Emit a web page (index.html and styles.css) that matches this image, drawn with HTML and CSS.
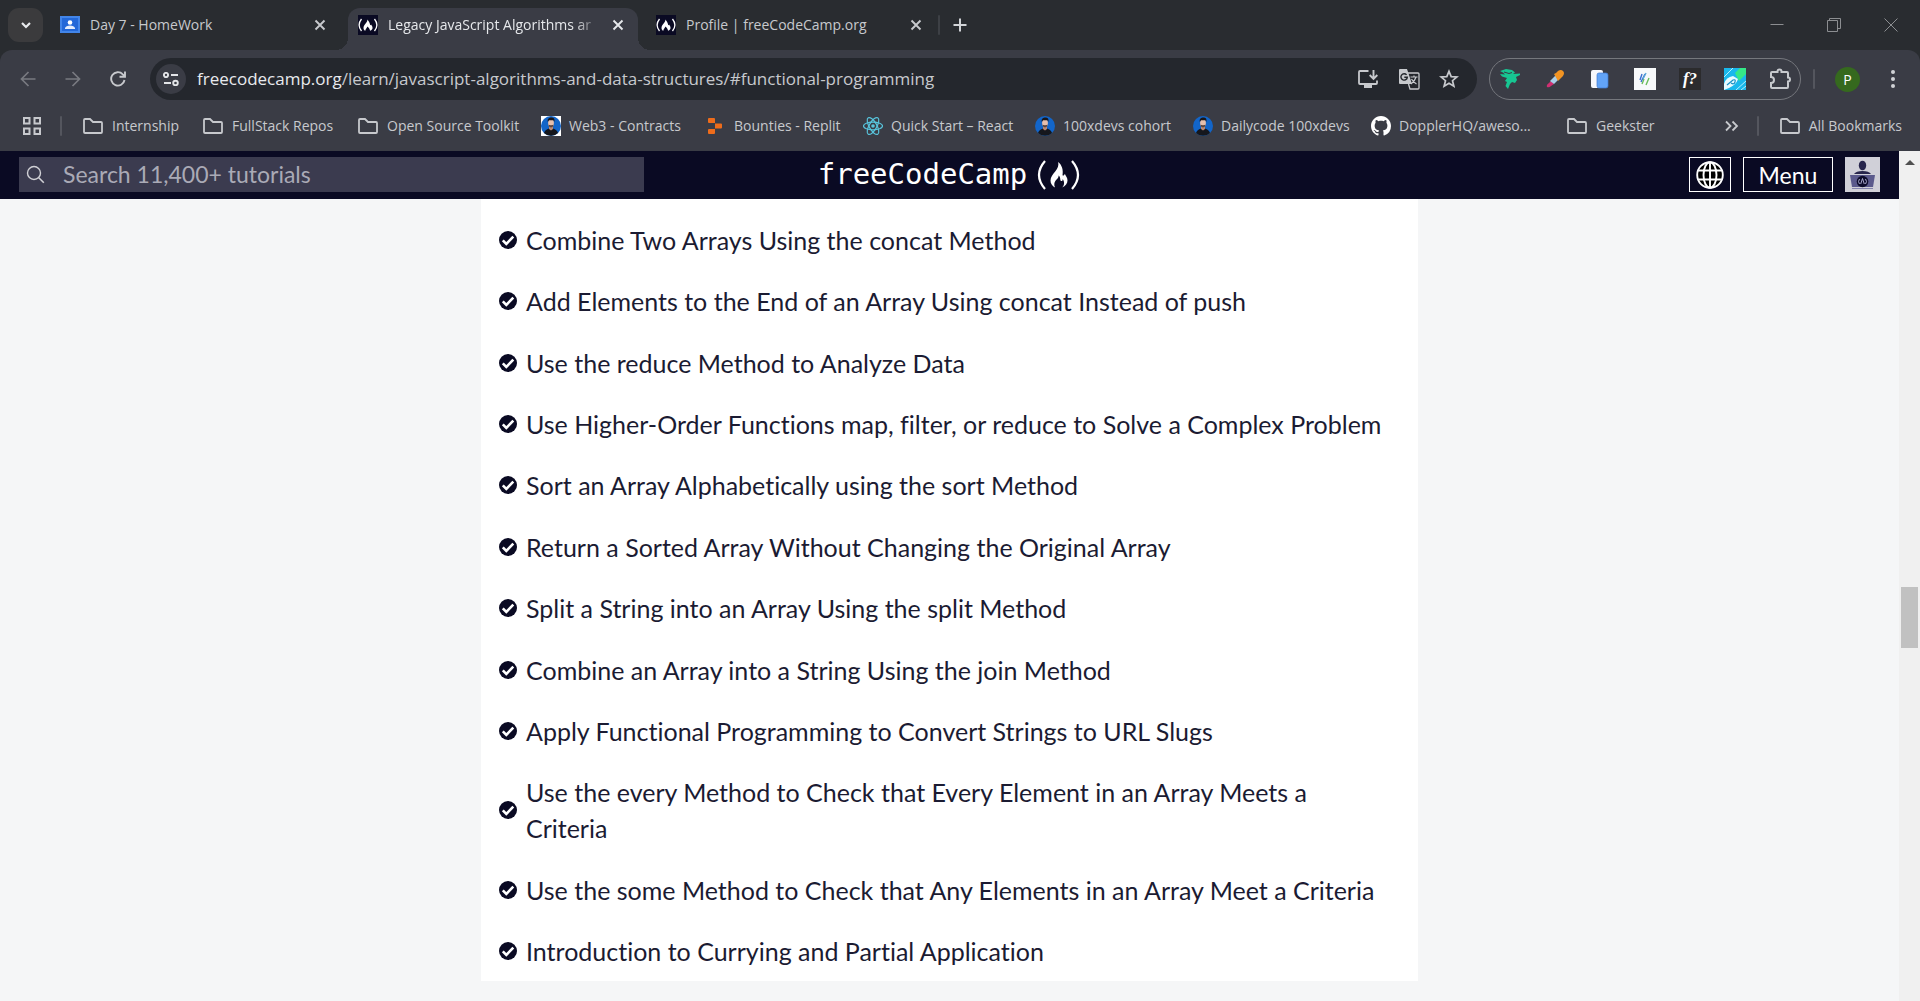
FILE: index.html
```html
<!DOCTYPE html>
<html lang="en">
<head>
<meta charset="utf-8">
<title>Legacy JavaScript Algorithms and Data Structures</title>
<link rel="stylesheet" href="styles.css">
</head>
<body>
<svg class="defs" aria-hidden="true">
  <symbol id="folder" viewBox="0 0 22 18"><path d="M2 15V3q0-1 1-1h5l3 3h8q1 0 1 1v9q0 1-1 1H3q-1 0-1-1z" fill="none" stroke="currentColor" stroke-width="1.8"/></symbol>
  <symbol id="cross" viewBox="0 0 16 16"><path d="M3.500 3.500l9 9M12.500 3.500l-9 9" stroke="currentColor" stroke-width="1.900"/></symbol>
  <symbol id="flame" viewBox="0 0 18 26"><path d="M8.200 0C8.800 3.500 8 6 5.200 9.500C3 12.300.5 14.800.5 18.500C.5 21.500 2.200 24 5 25.500C3.600 22.500 4.200 19.500 7 17C8.200 16 8.800 14.500 8.500 13.400C10.700 14.800 10 17.500 10.700 18.700C11.800 19.500 13 18.500 12.600 16.900C14.800 19.500 14.500 23.500 12 25.500C15.500 24 17.600 21.500 17.500 18.200C17.400 15.500 15.600 14 14.800 11.800C14.400 13.200 13.500 14 12.500 13.300C13.400 8 12 3 8.200 0z" fill="#fff"/></symbol>
  <symbol id="camp" viewBox="0 0 20 20"><path d="M0 0h20v20H0z" fill="#0a0a23"/><path d="M3.500 4q-4.800 6 0 12M16.500 4q4.800 6 0 12" fill="none" stroke="#fff" stroke-width="1.300"/><path d="M9.300 4.500c.7 3-3.800 5-3.800 8.500 0 1.500.8 2.400 1.800 2.800.2-2.200 1.700-2.600 2.100-4.300 1 .9 2.200 2 2.700 4.200 1.600-.6 2.600-1.500 2.400-3.200-.1-1.400-1-2-1.400-3-.2.7-.5.900-.9.600C11.800 8 10.800 6 9.300 4.500z" fill="#fff"/></symbol>
  <symbol id="check" viewBox="0 0 18 18"><circle cx="9" cy="9" r="9" fill="#0a0a23"/><path d="M3.800 9.300l3.500 3.600 7-7.200" fill="none" stroke="#fff" stroke-width="2.600"/></symbol>
  <symbol id="person" viewBox="0 0 20 20"><circle cx="10" cy="10" r="10" fill="#1265c9"/><path d="M3 17q1-3.500 5-4.500h4q4 1 5 4.500a10 10 0 0 1-14 0z" fill="#15171d"/><path d="M8 9h4v4l-2 1.500-2-1.500z" fill="#b98873"/><ellipse cx="10" cy="7" rx="2.900" ry="3.900" fill="#e6bfac"/><path d="M6.800 6C6 2 9 1.200 11 1.500c2.500.3 2.800 2.500 2.300 4.500L12.500 4.200H8z" fill="#1b1719"/><path d="M7.300 8.800q2.700.8 5.400 0-.5 2.600-2.700 2.600T7.300 8.800z" fill="#5a453f"/></symbol>
</svg>

<header class="tabstrip">
  <button class="tab-search" aria-label="Search tabs"><svg width="16" height="16" viewBox="0 0 16 16"><path d="M4 6l4 4 4-4" fill="none" stroke="#e8eaed" stroke-width="2.200"/></svg></button>
  <nav class="tabs" aria-label="Tabs">
    <div class="tab">
      <svg class="fav" viewBox="0 0 20 20"><path d="M0 1h20v17H0z" fill="#4285e8"/><path d="M2 3h16v13H2z" fill="#2368d8"/><circle cx="10" cy="7.500" r="2.300" fill="#fff"/><path d="M5 14v-1q1-2.500 5-2.500t5 2.500v1z" fill="#e4edfc"/></svg>
      <span class="tab-title">Day 7 - HomeWork</span>
      <button class="icon-btn" aria-label="Close tab"><svg class="x"><use href="#cross"/></svg></button>
    </div>
    <div class="tab tab-active">
      <svg class="fav"><use href="#camp"/></svg>
      <span class="tab-title">Legacy JavaScript Algorithms ar</span>
      <button class="icon-btn" aria-label="Close tab"><svg class="x"><use href="#cross"/></svg></button>
    </div>
    <div class="tab">
      <svg class="fav"><use href="#camp"/></svg>
      <span class="tab-title">Profile | freeCodeCamp.org</span>
      <button class="icon-btn" aria-label="Close tab"><svg class="x"><use href="#cross"/></svg></button>
    </div>
  </nav>
  <span class="rule"></span>
  <button class="icon-btn new-tab" aria-label="New tab"><svg width="14" height="14" viewBox="0 0 14 14"><path d="M7 .5v13M.5 7h13" stroke="#d2d4d8" stroke-width="2"/></svg></button>
  <div class="window-controls">
    <button class="icon-btn" aria-label="Minimize"><svg width="14" height="14" viewBox="0 0 14 14"><path d="M.5 6.500h13" stroke="currentColor"/></svg></button>
    <button class="icon-btn" aria-label="Restore"><svg width="14" height="14" viewBox="0 0 14 14"><path d="M.5 2.500h10v11H.5zM2.500 2.500v-2h11v10h-3" fill="none" stroke="currentColor"/></svg></button>
    <button class="icon-btn" aria-label="Close"><svg width="14" height="14" viewBox="0 0 14 14"><path d="M.5.5l13 13M13.500.5l-13 13" stroke="currentColor"/></svg></button>
  </div>
</header>

<section class="chrome">
  <div class="toolbar">
    <div class="nav-buttons">
      <button class="icon-btn dim" aria-label="Back"><svg width="16" height="16" viewBox="0 0 16 16"><path d="M15.500 8H2M8.500 1L1.500 8l7 7" fill="none" stroke="currentColor" stroke-width="1.700"/></svg></button>
      <button class="icon-btn dim" aria-label="Forward"><svg width="16" height="16" viewBox="0 0 16 16"><path d="M.5 8H14M7.500 1l7 7-7 7" fill="none" stroke="currentColor" stroke-width="1.700"/></svg></button>
      <button class="icon-btn" aria-label="Reload"><svg width="16" height="16" viewBox="0 0 16 16"><path d="M14.500 9A6.700 6.700 0 1 1 12.800 3.300L15 5.500M15 .5v5.300H9.500" fill="none" stroke="currentColor" stroke-width="1.900"/></svg></button>
    </div>
    <div class="omnibox">
      <button class="site-info" aria-label="View site information"><svg width="16" height="14" viewBox="0 0 16 14"><g fill="none" stroke="#e3e5e8" stroke-width="1.900"><circle cx="3" cy="3" r="2.100"/><path d="M8 3h7M1 11h7"/><circle cx="12.500" cy="11" r="2.300"/></g></svg></button>
      <a class="url" href="#functional-programming"><span class="host">freecodecamp.org</span>/learn/javascript-algorithms-and-data-structures/#functional-programming</a>
      <div class="page-actions">
        <button class="icon-btn" aria-label="Install"><svg width="22" height="20" viewBox="0 0 22 20"><path d="M11.500 2H3q-1 0-1 1v11q0 1 1 1h16q1 0 1-1v-2.500" fill="none" stroke="currentColor" stroke-width="1.800"/><path d="M7 15h8v4H7z" fill="currentColor"/><path d="M16.500 1v8M12.700 6l3.800 3.800L20.300 6" fill="none" stroke="currentColor" stroke-width="1.900"/></svg></button>
        <button class="icon-btn" aria-label="Translate"><svg width="22" height="22" viewBox="0 0 22 22"><path d="M2 1h7l5 15H2q-1 0-1-1V2q0-1 1-1z" fill="#c7c9cd"/><path d="M10 5h10q1 0 1 1v14q0 1-1 1h-8l-1.500-5" fill="none" stroke="#c7c9cd" stroke-width="1.300"/><path d="M8.600 6.900A3.200 3.200 0 1 0 9.300 9.300H6.300" fill="none" stroke="#24272d" stroke-width="1.400"/><path d="M12.500 9h7M16 7.500V9M18 9q-1 4-5 7M13.500 11q1.500 3 5 5" fill="none" stroke="#c7c9cd" stroke-width="1.200"/></svg></button>
        <button class="icon-btn" aria-label="Bookmark this page"><svg width="20" height="20" viewBox="0 0 20 20"><path d="M10 2.300l2.200 5.300 5.700.4-4.400 3.700 1.400 5.600L10 14.300l-4.900 3 1.400-5.600L2.100 8l5.700-.4z" fill="none" stroke="currentColor" stroke-width="1.700"/></svg></button>
      </div>
    </div>
    <div class="extensions">
      <svg viewBox="0 0 22 22"><path d="M1 3l6-2 6 1 3 2.500-2 1.500 7-.5v1.500l-4 2 1 3-2 3-3-1-2 2-2 5-2.500-3 1.500-4-2-1 2-3-5-1.500-2-2.500 5 .5-2-2z" fill="#17c692"/><path d="M5 4l5 1.500 3-1" stroke="#3a3c45" fill="none"/></svg>
      <svg viewBox="0 0 22 22"><path d="M3 19q-1-2 2-4l2-2 3 3-3 2q-2 2-4 1z" fill="#cf2f72"/><path d="M6 13l6-6 4 3-6 6z" fill="#a9cee9"/><path d="M10 6l2-1 2-2q3-2 5 0t0 5l-4 4-1 1z" fill="#f29423"/></svg>
      <svg viewBox="0 0 22 22"><rect x="2" y="2" width="12" height="18" rx="2" fill="#f7f7fc"/><rect x="8" y="5" width="11" height="15" rx="2" fill="#62a3f7" stroke="#3f79d1" stroke-width=".7"/></svg>
      <svg viewBox="0 0 22 22"><path d="M0 0h22v22H0z" fill="#f7f9fb"/><g fill="none" stroke-width="1.400"><path d="M6 12l2-6M7 14l4-8" stroke="#3a6fd0"/><path d="M12 17l3-7M8 16l2-5" stroke="#69bd5b"/><path d="M9 11l3-6" stroke="#5aa7d8"/></g></svg>
      <span class="ext-font">f?</span>
      <svg viewBox="0 0 22 22"><path d="M0 0h22v22H0z" fill="#19b8ec"/><path d="M11 5l5-5h6v6l-7 7z" fill="#35e887"/><path d="M0 16q2-7 9-8l5 3q-2 6-9 9l-5 2z" fill="#e7fbff"/><path d="M3 17l6-5q3-1 2 2t-4 1" fill="none" stroke="#168fc4" stroke-width="1.200"/><path d="M0 9l9-9M12 22l10-9M17 22l5-4" stroke="#b5f0ff"/></svg>
      <svg viewBox="0 0 22 22"><path d="M3 4h5.500V3.500a2 2 0 0 1 4 0V4H18q1 0 1 1v4.500a2 2 0 0 1 0 4V19q0 1-1 1H3q-1 0-1-1v-4a3 3 0 0 0 0-6V5q0-1 1-1z" fill="none" stroke="#c7c9cd" stroke-width="2"/></svg>
    </div>
    <span class="rule"></span>
    <button class="profile" aria-label="Profile">P</button>
    <button class="icon-btn more" aria-label="More"><svg width="4" height="20" viewBox="0 0 4 20"><g fill="#d0d2d6"><circle cx="2" cy="3" r="2"/><circle cx="2" cy="10" r="2"/><circle cx="2" cy="17" r="2"/></g></svg></button>
  </div>

  <nav class="bookmarks" aria-label="Bookmarks">
    <button class="icon-btn" aria-label="Apps"><svg width="20" height="20" viewBox="0 0 20 20"><g fill="none" stroke="currentColor" stroke-width="2"><path d="M2 2h5.500v5.500H2zM12.500 2H18v5.500h-5.500zM2 12.500h5.500V18H2zM12.500 12.500H18V18h-5.500z"/></g></svg></button>
    <span class="rule"></span>
    <div class="bookmark-list">
      <a href="#"><svg class="fold"><use href="#folder"/></svg>Internship</a>
      <a href="#"><svg class="fold"><use href="#folder"/></svg>FullStack Repos</a>
      <a href="#"><svg class="fold"><use href="#folder"/></svg>Open Source Toolkit</a>
      <a href="#"><svg class="fav white"><use href="#person"/></svg>Web3 - Contracts</a>
      <a href="#"><svg class="fav" viewBox="0 0 20 20"><path d="M3 2h5q1 0 1 1v4H3q-1 0-1-1V3q0-1 1-1zM9 7.500h6q1 0 1 1v3q0 1-1 1H9zM3 13h6v4q0 1-1 1H3q-1 0-1-1v-3q0-1 1-1z" fill="#ee6c1b"/></svg>Bounties - Replit</a>
      <a href="#"><svg class="fav" viewBox="0 0 20 20"><g fill="none" stroke="#58c4dc" stroke-width="1.200"><ellipse cx="10" cy="10" rx="9.500" ry="3.800"/><ellipse cx="10" cy="10" rx="9.500" ry="3.800" transform="rotate(60 10 10)"/><ellipse cx="10" cy="10" rx="9.500" ry="3.800" transform="rotate(120 10 10)"/></g><circle cx="10" cy="10" r="1.800" fill="#58c4dc"/></svg>Quick Start – React</a>
      <a href="#"><svg class="fav"><use href="#person"/></svg>100xdevs cohort</a>
      <a href="#"><svg class="fav"><use href="#person"/></svg>Dailycode 100xdevs</a>
      <a href="#"><svg class="fav" viewBox="0 0 16 16"><path fill="#fff" d="M8 0C3.580 0 0 3.580 0 8c0 3.540 2.290 6.530 5.470 7.590.4.070.55-.17.55-.38 0-.19-.01-.82-.01-1.490-2.010.37-2.530-.49-2.690-.94-.09-.23-.48-.94-.82-1.130-.28-.15-.68-.52-.01-.53.63-.01 1.080.58 1.230.82.72 1.210 1.870.87 2.330.66.07-.52.28-.87.51-1.070-1.780-.2-3.640-.89-3.640-3.950 0-.87.31-1.590.82-2.150-.08-.2-.36-1.020.08-2.120 0 0 .67-.21 2.200.82.64-.18 1.320-.27 2-.27s1.360.09 2 .27c1.530-1.040 2.200-.82 2.200-.82.44 1.100.16 1.920.08 2.120.51.56.82 1.270.82 2.150 0 3.070-1.870 3.750-3.650 3.950.29.25.54.73.54 1.480 0 1.070-.01 1.930-.01 2.200 0 .21.15.46.55.38A8.010 8.010 0 0 0 16 8c0-4.420-3.580-8-8-8z"/></svg>DopplerHQ/aweso...</a>
      <a href="#"><svg class="fold"><use href="#folder"/></svg>Geekster</a>
    </div>
    <button class="icon-btn" aria-label="More bookmarks"><svg width="14" height="12" viewBox="0 0 14 12"><path d="M1 1.500L5.500 6 1 10.500M7.500 1.500L12 6l-4.500 4.500" fill="none" stroke="currentColor" stroke-width="1.800"/></svg></button>
    <span class="rule"></span>
    <a class="all" href="#"><svg class="fold"><use href="#folder"/></svg>All Bookmarks</a>
  </nav>
</section>

<div class="viewport">
  <div class="page">
    <header class="site-header">
      <form class="search">
        <button type="button" class="icon-btn" aria-label="Submit search"><svg width="19" height="19" viewBox="0 0 19 19"><circle cx="8" cy="8" r="6.500" fill="none" stroke="#d0d0d5" stroke-width="1.400"/><path d="M12.800 12.800l5 5" stroke="#d0d0d5" stroke-width="1.600"/></svg></button>
        <input type="text" aria-label="Search" placeholder="Search 11,400+ tutorials">
      </form>
      <a class="logo" href="#">freeCodeCamp<svg width="45" height="30" viewBox="0 0 45 30"><path d="M9 1Q-3 15 9 29M36 1Q48 15 36 29" fill="none" stroke="#fff" stroke-width="2.200"/><use href="#flame" x="14" y="2" width="18" height="26"/></svg></a>
      <div class="site-actions">
        <button class="outline" aria-label="Change language"><svg width="28" height="28" viewBox="0 0 28 28"><circle cx="14" cy="14" r="13" fill="#000"/><g fill="none" stroke="#fff" stroke-width="1.900"><circle cx="14" cy="14" r="12.800"/><ellipse cx="14" cy="14" rx="6.500" ry="12.800"/><path d="M14 1v26M2.500 9.500h23M2.500 18.500h23"/></g></svg></button>
        <button class="outline menu">Menu</button>
        <a class="avatar" href="#" aria-label="Your profile"><svg width="35" height="35" viewBox="0 0 35 35"><path d="M0 0h35v35H0z" fill="#d0d0d8"/><ellipse cx="17.500" cy="8.500" rx="3.700" ry="4.800" fill="#28264d"/><path d="M9 17q2-3 8.500-3t8.500 3z" fill="#28264d"/><path d="M5 18h25l-2 12H7z" fill="#5b5a8c"/><path d="M7 31h21v1H7z" fill="#8584ad"/><circle cx="17.500" cy="24.500" r="5.800" fill="#0e0d2c"/><path d="M14.500 22q-2 2.500 0 5M20.500 22q2 2.500 0 5M17.500 21.500l-1.800 5.500M17.500 21.500l1.800 5.500" fill="none" stroke="#aaa9cc"/></svg></a>
      </div>
    </header>
    <main class="content">
      <ul class="lessons">
        <li><svg><use href="#check"/></svg><a href="#">Combine Two Arrays Using the concat Method</a></li>
        <li><svg><use href="#check"/></svg><a href="#">Add Elements to the End of an Array Using concat Instead of push</a></li>
        <li><svg><use href="#check"/></svg><a href="#">Use the reduce Method to Analyze Data</a></li>
        <li><svg><use href="#check"/></svg><a href="#">Use Higher-Order Functions map, filter, or reduce to Solve a Complex Problem</a></li>
        <li><svg><use href="#check"/></svg><a href="#">Sort an Array Alphabetically using the sort Method</a></li>
        <li><svg><use href="#check"/></svg><a href="#">Return a Sorted Array Without Changing the Original Array</a></li>
        <li><svg><use href="#check"/></svg><a href="#">Split a String into an Array Using the split Method</a></li>
        <li><svg><use href="#check"/></svg><a href="#">Combine an Array into a String Using the join Method</a></li>
        <li><svg><use href="#check"/></svg><a href="#">Apply Functional Programming to Convert Strings to URL Slugs</a></li>
        <li><svg><use href="#check"/></svg><a href="#">Use the every Method to Check that Every Element in an Array Meets a Criteria</a></li>
        <li><svg><use href="#check"/></svg><a href="#">Use the some Method to Check that Any Elements in an Array Meet a Criteria</a></li>
        <li><svg><use href="#check"/></svg><a href="#">Introduction to Currying and Partial Application</a></li>
      </ul>
    </main>
  </div>
  <div class="scrollbar" aria-hidden="true">
    <svg width="12" height="22" viewBox="0 0 12 22"><path d="M1 14l5-5 5 5z" fill="#505050"/></svg>
    <span class="before"></span><span class="thumb"></span><span class="after"></span>
  </div>
</div>
</body>
</html>
```
FILE: styles.css
```css
* { box-sizing: border-box; }

body {
  margin: 0;
  min-height: 100vh;
  display: flex;
  flex-direction: column;
  background: #292c30;
  color: #c7c9cd;
  font: 14px/20px "Open Sans", "Noto Sans", sans-serif;
}

a { color: inherit; text-decoration: none; }
button { font: inherit; color: inherit; padding: 0; border: 0; background: none; }
svg { display: block; flex: none; }
.defs { position: absolute; width: 0; height: 0; }
.icon-btn { display: grid; place-items: center; flex: none; }
.rule { width: 2px; height: 20px; border-radius: 1px; background: #54565e; flex: none; }
.fav { width: 20px; height: 20px; }
.fold { width: 22px; height: 18px; }
.white { background: #fff; }

/* Tab strip */
.tabstrip { display: flex; align-items: center; height: 50px; padding-left: 8px; }
.tab-search {
  display: grid;
  place-items: center;
  width: 35px;
  height: 34px;
  border-radius: 11px;
  background: #3b3b3d;
}
.tabs { display: flex; gap: 8px; align-self: stretch; margin-left: 7px; padding-top: 8px; }
.tab {
  position: relative;
  display: flex;
  align-items: center;
  gap: 10px;
  width: 290px;
  padding: 0 12px 8px 10px;
}
.tab-title { flex: 1; white-space: nowrap; }
.tab-active { background: #3a3c45; border-radius: 12px 12px 0 0; color: #e6e8eb; }
.tab-active .tab-title {
  -webkit-mask-image: linear-gradient(90deg, #000 88%, transparent 100%);
  mask-image: linear-gradient(90deg, #000 88%, transparent 100%);
}
.tab-active::before, .tab-active::after {
  content: "";
  position: absolute;
  bottom: 0;
  width: 12px;
  height: 12px;
}
.tab-active::before { right: 100%; background: radial-gradient(circle at 0 0, transparent 12px, #3a3c45 12px); }
.tab-active::after { left: 100%; background: radial-gradient(circle at 100% 0, transparent 12px, #3a3c45 12px); }
.x { width: 16px; height: 16px; }
.tabstrip > .rule { margin-left: 2px; background: #3d4045; }
.new-tab { margin-left: 13px; }
.window-controls { display: flex; gap: 43px; margin-left: auto; padding-right: 22px; color: #8c8e91; }

/* Toolbar and bookmarks */
.chrome { background: #3a3c45; border-radius: 12px 12px 0 0; }
.toolbar { display: flex; align-items: center; height: 58px; padding: 0 25px 0 20px; }
.nav-buttons { display: flex; gap: 29px; margin-right: 24px; }
.dim { color: #787a80; }
.omnibox {
  flex: 1;
  display: flex;
  align-items: center;
  height: 42px;
  padding: 0 18px 0 6px;
  border-radius: 21px;
  background: #24272d;
}
.site-info {
  display: grid;
  place-items: center;
  width: 30px;
  height: 30px;
  margin-right: 11px;
  border-radius: 50%;
  background: #3a3c45;
}
.url { flex: 1; font-size: 17px; white-space: nowrap; }
.host { color: #e8eaed; }
.page-actions { display: flex; align-items: center; gap: 19px; }
.extensions {
  display: flex;
  align-items: center;
  gap: 23px;
  height: 42px;
  margin: 0 12px;
  padding: 0 9px;
  border: 1px solid #75777d;
  border-radius: 21px;
}
.extensions svg { width: 22px; height: 22px; }
.ext-font {
  width: 22px;
  text-align: center;
  color: #fff;
  background: #2b2b2d;
  font: italic bold 17px/22px "Liberation Serif", serif;
}
.profile {
  width: 25px;
  height: 25px;
  margin: 0 31px 0 20px;
  border-radius: 50%;
  background: #35691e;
  color: #fff;
  line-height: 25px;
}
.bookmarks { display: flex; align-items: center; height: 43px; padding: 0 18px 8px 22px; }
.bookmarks > .rule { margin: 0 20px 0 18px; }
.bookmarks a { display: flex; align-items: center; gap: 8px; white-space: nowrap; }
.bookmark-list {
  flex: 1;
  display: grid;
  grid-template-columns: 120px 155px 184px 165px 157px 172px 158px 178px 195px 1fr;
}

/* Site */
.viewport { flex: 1; display: flex; background: #f5f6f7; }
.page {
  flex: 1;
  display: flex;
  flex-direction: column;
  font-family: Lato, sans-serif;
  font-variant-ligatures: no-common-ligatures;
}
.site-header {
  display: grid;
  grid-template-columns: 1fr auto 1fr;
  align-items: start;
  height: 48px;
  padding: 6px 19px 0;
  background: #0a0a23;
  color: #fff;
}
.search {
  display: flex;
  align-items: center;
  gap: 18px;
  width: 100%;
  max-width: 625px;
  height: 35px;
  padding-left: 7px;
  background: #3b3b4f;
}
.search input {
  flex: 1;
  height: 35px;
  padding: 0;
  border: 0;
  background: none;
  color: #fff;
  font: 23px/35px Lato, sans-serif;
}
.search input::placeholder { color: #aaaab6; opacity: 1; }
.logo { display: flex; align-items: center; gap: 9px; font: 29px/35px "DejaVu Sans Mono", monospace; }
.site-actions { display: flex; gap: 12px; justify-content: flex-end; }
.outline { display: grid; place-items: center; width: 42px; height: 35px; border: 1px solid #fff; }
.menu { width: 90px; font-size: 23px; }

.content { flex: 1; display: flex; justify-content: center; padding-bottom: 20px; }
.lessons {
  display: flex;
  flex-direction: column;
  justify-content: space-between;
  width: 937px;
  margin: 0;
  padding: 23px 27px 12px 18px;
  list-style: none;
  background: #fff;
  color: #1b1b32;
  font-size: 25px;
  line-height: 36px;
}
.lessons li { display: flex; align-items: center; gap: 9px; }
.lessons svg { width: 18px; height: 18px; }

.scrollbar { display: flex; flex-direction: column; align-items: center; width: 21px; background: #f0f0f0; }
.before { flex: 414; }
.thumb { width: 17px; height: 61px; background: #c1c1c1; }
.after { flex: 353; }
```
